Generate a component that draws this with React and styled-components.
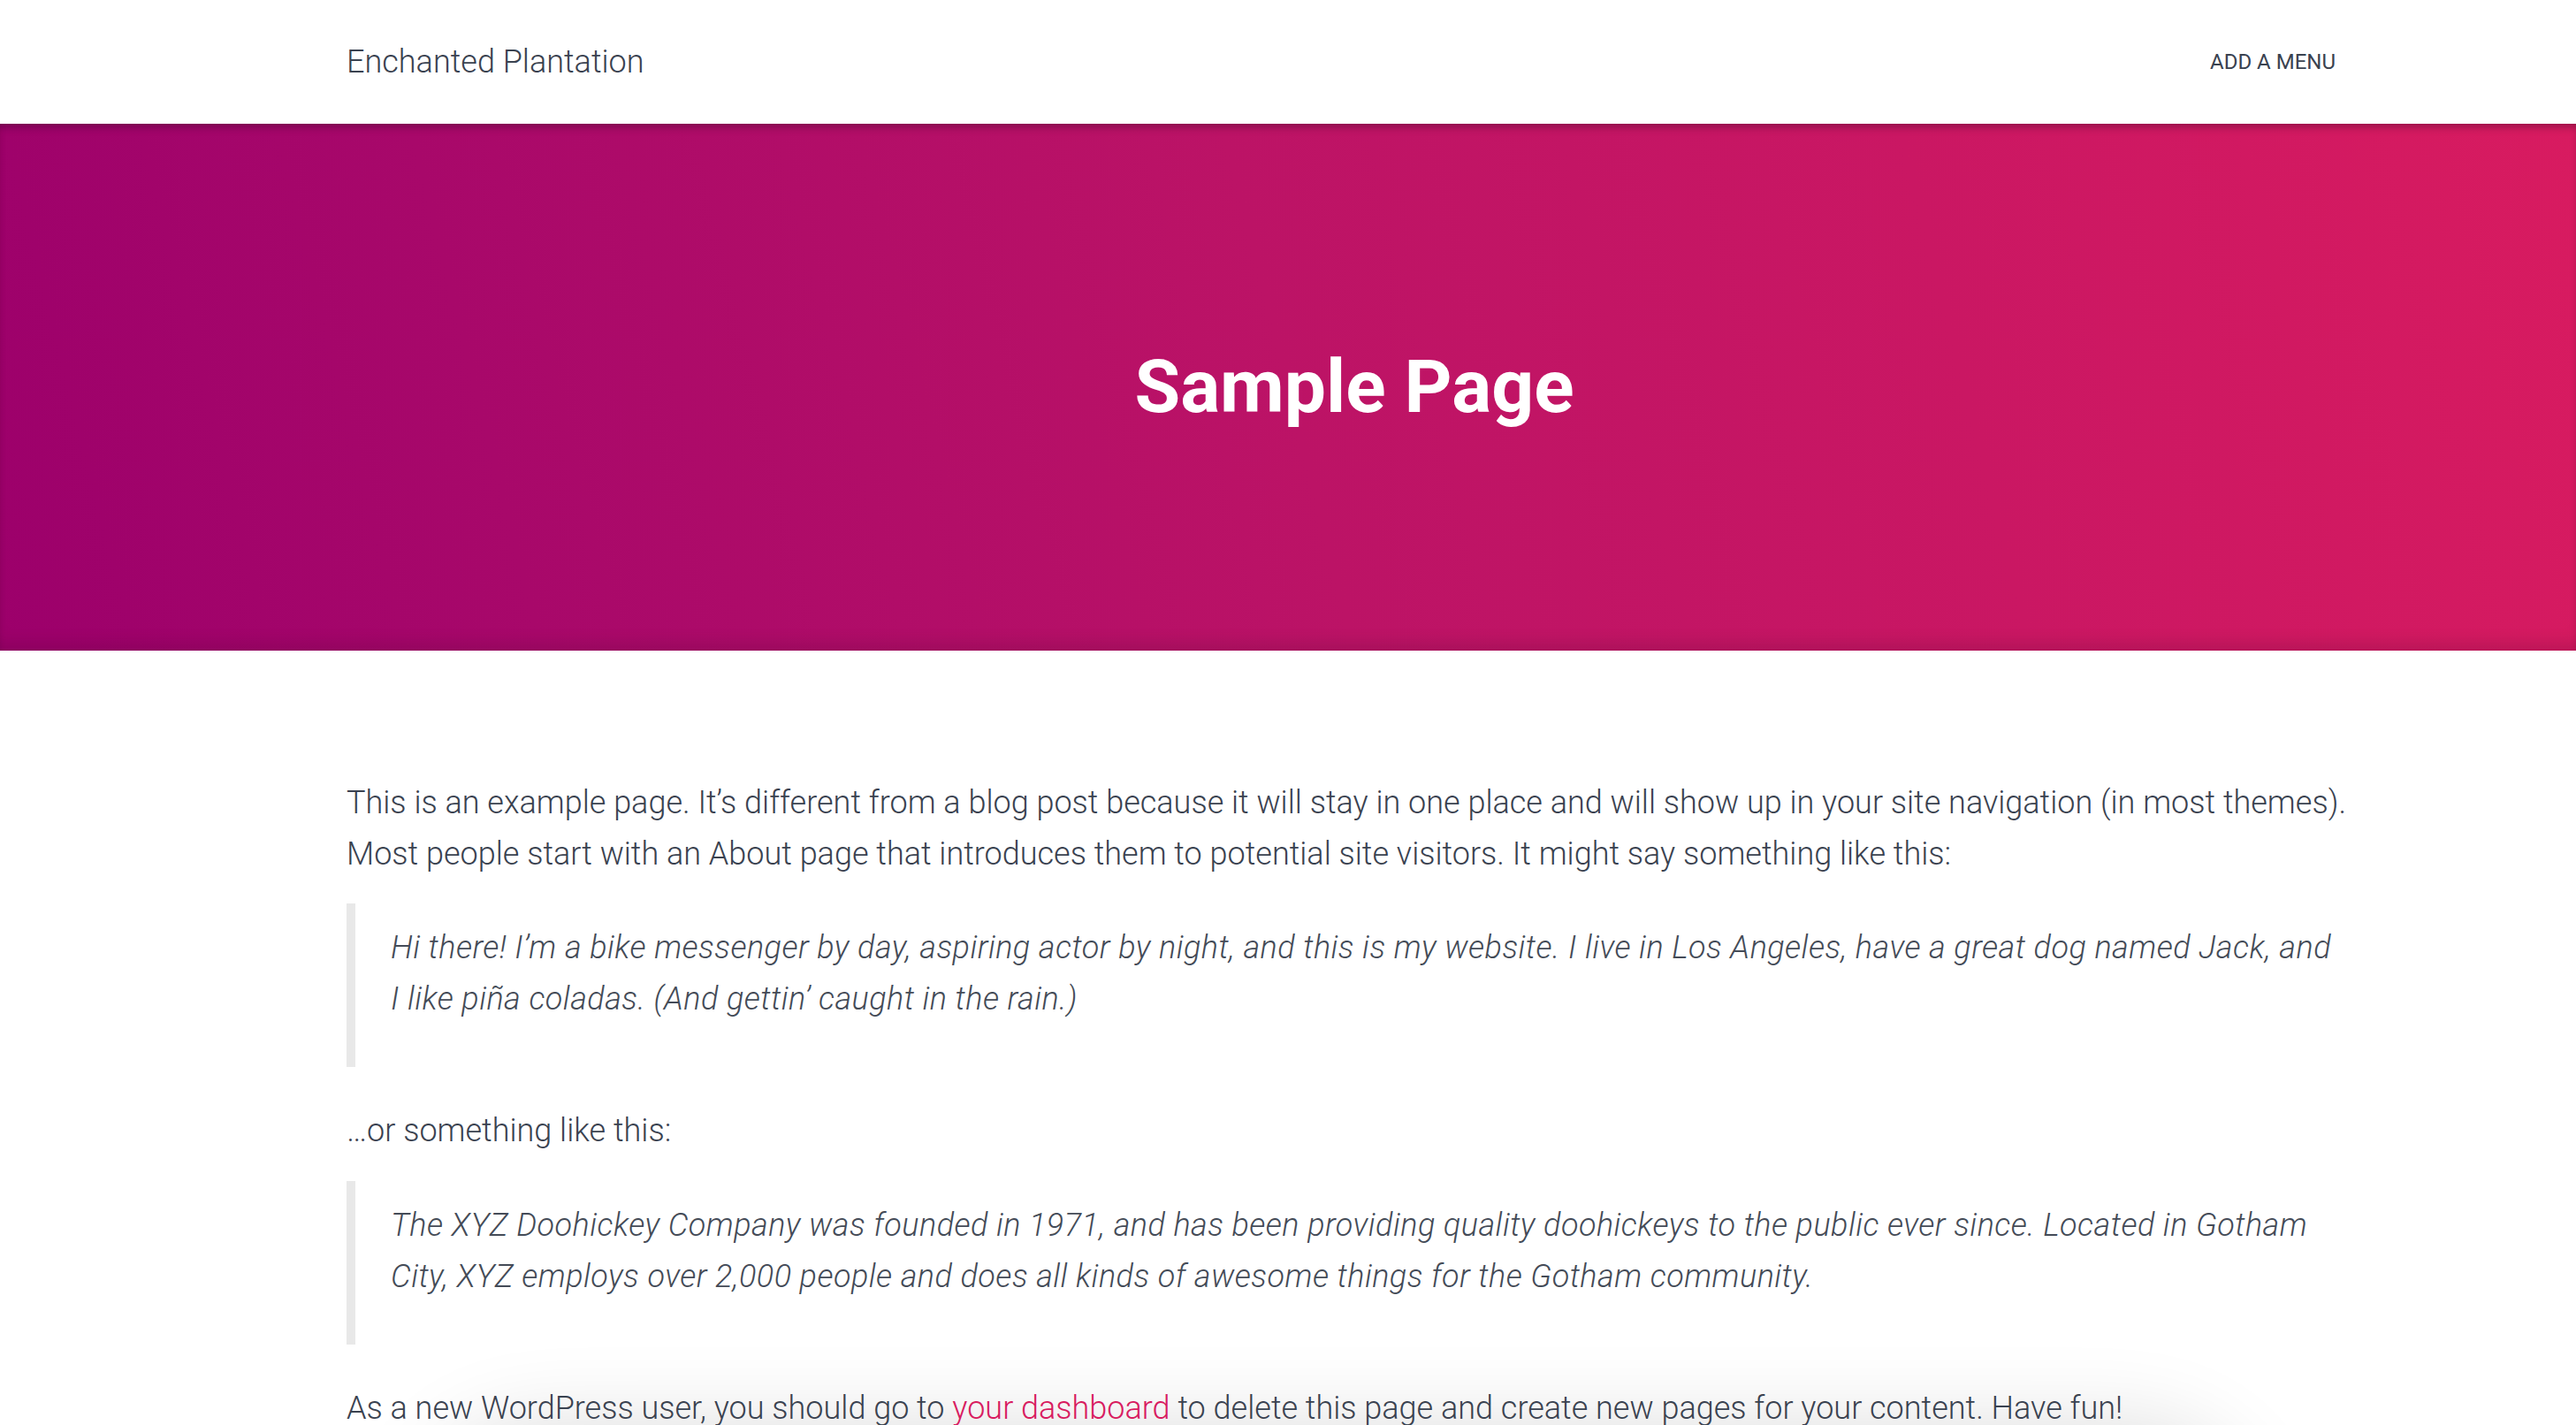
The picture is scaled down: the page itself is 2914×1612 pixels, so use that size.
import React from "react";
import styled, { createGlobalStyle } from "styled-components";

const GlobalStyle = createGlobalStyle`
  html { overflow: hidden; }
  html, body { margin: 0; padding: 0; background: #ffffff; }
  body {
    font-family: Roboto, "Liberation Sans", sans-serif;
    color: #3a4250;
    -webkit-font-smoothing: antialiased;
  }
  * { box-sizing: border-box; }
`;

const Page = styled.div`
  position: relative;
  min-height: 1612px;
`;

const Header = styled.header`
  height: 140px;
  background: #ffffff;
  position: relative;
  z-index: 2;
`;

const Container = styled.div`
  width: 2280px;
  margin-left: 392px;
`;

const HeaderInner = styled(Container)`
  height: 100%;
  display: flex;
  align-items: center;
  justify-content: space-between;
  padding-right: 30px;
`;

const SiteTitle = styled.a`
  font-size: 36px;
  font-weight: 300;
  color: #3a4250;
  text-decoration: none;
`;

const MenuLink = styled.a`
  font-size: 24px;
  font-weight: 400;
  color: #3a4250;
  text-decoration: none;
  text-transform: uppercase;
`;

const Hero = styled.section`
  height: 596px;
  background: linear-gradient(76deg, #9c006b 0%, #a8086a 20%, #bc1366 50%, #d81b60 100%);
  box-shadow: inset 0 8px 8px -4px rgba(40, 0, 30, 0.35),
    inset 0 -18px 18px -10px rgba(60, 0, 40, 0.18);
  display: flex;
  align-items: center;
`;

const HeroInner = styled(Container)`
  display: flex;
  justify-content: center;
`;

const PageTitle = styled.h1`
  margin: 0;
  font-size: 84px;
  font-weight: 700;
  color: #ffffff;
  line-height: 1.2;
`;

const Main = styled.main`
  position: relative;
  z-index: 1;
  padding-top: 141px;
`;

const Paragraph = styled.p`
  margin: 0 0 27px;
  padding-top: 3px;
  font-size: 36px;
  font-weight: 300;
  line-height: 57.6px;
  color: #3a4250;
`;

const Quote = styled.blockquote`
  margin: 0 0 41px;
  padding: 22px 30px 17px 40px;
  border-left: 10px solid #e8e8e8;
`;

const QuoteText = styled.p`
  margin: 0 0 31px;
  font-size: 36px;
  font-weight: 300;
  font-style: italic;
  letter-spacing: 0.45px;
  line-height: 57.6px;
  color: #444b57;
`;

const Link = styled.a`
  color: #d81b60;
  text-decoration: none;
`;

const BottomShade = styled.div`
  position: absolute;
  left: 520px;
  width: 1980px;
  top: 1665px;
  height: 200px;
  border-radius: 90px;
  box-shadow: 0 0 100px 50px rgba(0, 0, 0, 0.14);
  pointer-events: none;
  z-index: 0;
`;

export default function App() {
  return (
    <Page>
      <GlobalStyle />
      <BottomShade />
      <Header>
        <HeaderInner>
          <SiteTitle href="#">Enchanted Plantation</SiteTitle>
          <MenuLink href="#">Add a menu</MenuLink>
        </HeaderInner>
      </Header>
      <Hero>
        <HeroInner>
          <PageTitle>Sample Page</PageTitle>
        </HeroInner>
      </Hero>
      <Main>
        <Container>
          <Paragraph>
            This is an example page. It’s different from a blog post because it will stay in one
            place and will show up in your site navigation (in most themes). Most people start with
            an About page that introduces them to potential site visitors. It might say something
            like this:
          </Paragraph>
          <Quote>
            <QuoteText>
              Hi there! I’m a bike messenger by day, aspiring actor by night, and this is my
              website. I live in Los Angeles, have a great dog named Jack, and I like piña coladas.
              (And gettin’ caught in the rain.)
            </QuoteText>
          </Quote>
          <Paragraph>…or something like this:</Paragraph>
          <Quote>
            <QuoteText>
              The XYZ Doohickey Company was founded in 1971, and has been providing quality
              doohickeys to the public ever since. Located in Gotham City, XYZ employs over 2,000
              people and does all kinds of awesome things for the Gotham community.
            </QuoteText>
          </Quote>
          <Paragraph>
            As a new WordPress user, you should go to <Link href="#">your dashboard</Link> to
            delete this page and create new pages for your content. Have fun!
          </Paragraph>
        </Container>
      </Main>
    </Page>
  );
}
